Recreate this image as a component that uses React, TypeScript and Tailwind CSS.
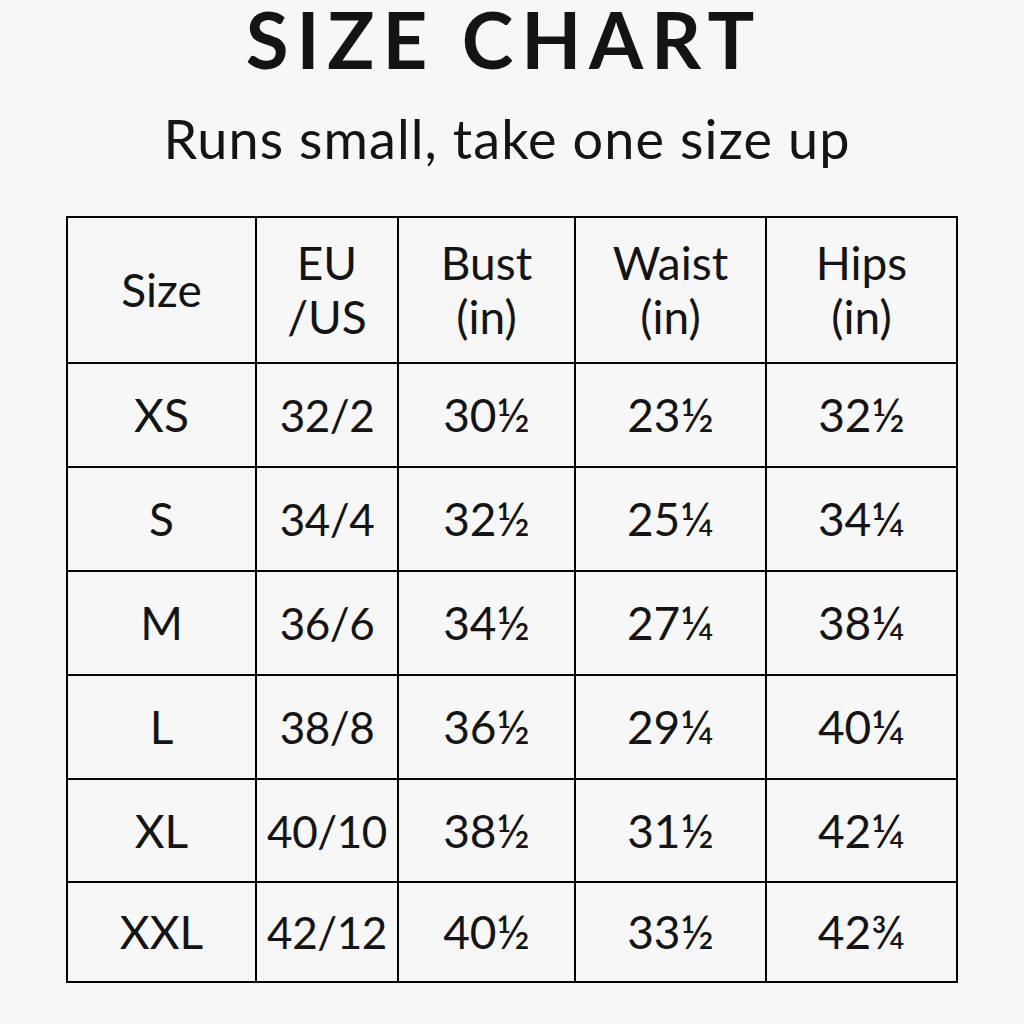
import React from 'react';

const rows = [
    ['XS', '32/2', '30½', '23½', '32½'],
    ['S', '34/4', '32½', '25¼', '34¼'],
    ['M', '36/6', '34½', '27¼', '38¼'],
    ['L', '38/8', '36½', '29¼', '40¼'],
    ['XL', '40/10', '38½', '31½', '42¼'],
    ['XXL', '42/12', '40½', '33½', '42¾'],
];

const rowHeights = ['h-[104px]', 'h-[104px]', 'h-[104px]', 'h-[104px]', 'h-[103px]', 'h-[100px]'];

const App: React.FC = () => {
    return (
        <div
            className="w-[1024px] h-[1024px] bg-[#f7f7f7] text-[#141414] flex flex-col items-center"
            style={{ fontFamily: 'Lato, "Open Sans", sans-serif' }}
        >
            <h1 className="mr-[16px] text-[78px] leading-[78px] font-bold tracking-[0.1em]">
                SIZE CHART
            </h1>
            <p className="mt-[31px] mr-[10px] text-[54px] leading-[60px] font-normal tracking-[0.02em]">
                Runs small, take one size up
            </p>

            {/* Table */}
            <table className="mt-[47px] border-collapse border-2 border-black text-[46px] text-center">
                <colgroup>
                    <col className="w-[189px]" />
                    <col className="w-[142px]" />
                    <col className="w-[177px]" />
                    <col className="w-[191px]" />
                    <col className="w-[191px]" />
                </colgroup>
                <thead>
                    <tr className="h-[146px] leading-[54px]">
                        <th className="border-2 border-black font-normal">Size</th>
                        <th className="border-2 border-black font-normal">
                            EU
                            <br />
                            /US
                        </th>
                        <th className="border-2 border-black font-normal">
                            Bust
                            <br />
                            (in)
                        </th>
                        <th className="border-2 border-black font-normal">
                            Waist
                            <br />
                            (in)
                        </th>
                        <th className="border-2 border-black font-normal">
                            Hips
                            <br />
                            (in)
                        </th>
                    </tr>
                </thead>
                <tbody>
                    {rows.map((r, i) => (
                        <tr key={r[0]} className={rowHeights[i]}>
                            {r.map((c, j) => (
                                <td
                                    key={j}
                                    className={`border-2 border-black p-0 whitespace-nowrap leading-none ${j === 1 ? 'text-[44px] tracking-[-0.01em]' : ''}`}
                                >
                                    {c}
                                </td>
                            ))}
                        </tr>
                    ))}
                </tbody>
            </table>
        </div>
    );
};

export default App;
